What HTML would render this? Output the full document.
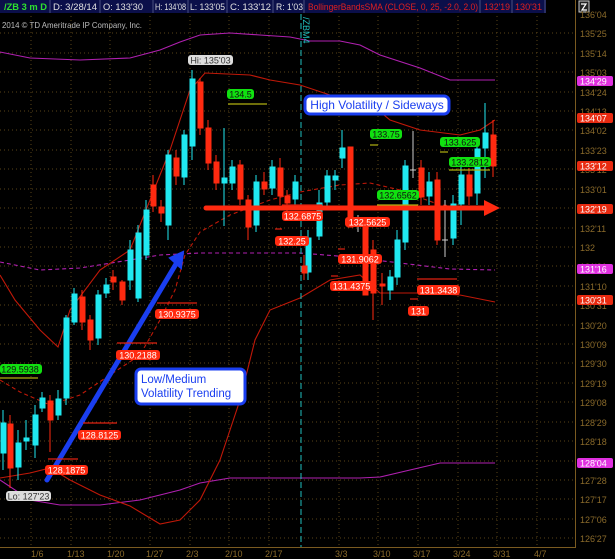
<!DOCTYPE html>
<html><head><meta charset="utf-8"><style>
html,body{margin:0;padding:0;background:#000;width:615px;height:559px;overflow:hidden}
svg{display:block}
text{font-family:"Liberation Sans",sans-serif}
</style></head><body>
<svg width="615" height="559" viewBox="0 0 615 559" xmlns="http://www.w3.org/2000/svg">
<rect width="615" height="559" fill="#000"/>
<!-- header -->
<rect x="0" y="0" width="546" height="13" fill="#0b0f4a"/>
<g stroke="#4a4f80" stroke-width="1">
<line x1="50" y1="0" x2="50" y2="13"/><line x1="100" y1="0" x2="100" y2="13"/><line x1="153" y1="0" x2="153" y2="13"/><line x1="188" y1="0" x2="188" y2="13"/><line x1="227" y1="0" x2="227" y2="13"/><line x1="273" y1="0" x2="273" y2="13"/><line x1="304" y1="0" x2="304" y2="13"/><line x1="480" y1="0" x2="480" y2="13"/><line x1="512" y1="0" x2="512" y2="13"/><line x1="545" y1="0" x2="545" y2="13"/>
</g>
<g font-size="9" fill="#e0e0e0" lengthAdjust="spacingAndGlyphs">
<text x="4" y="10" fill="#2ee02e" font-weight="bold" textLength="43" lengthAdjust="spacingAndGlyphs">/ZB 3 m D</text>
<text x="53" y="10" textLength="44" lengthAdjust="spacingAndGlyphs">D: 3/28/14</text>
<text x="103" y="10" textLength="40" lengthAdjust="spacingAndGlyphs">O: 133'30</text>
<text x="155" y="10" textLength="31" lengthAdjust="spacingAndGlyphs">H: 134'08</text>
<text x="190" y="10" textLength="35" lengthAdjust="spacingAndGlyphs">L: 133'05</text>
<text x="230" y="10" textLength="41" lengthAdjust="spacingAndGlyphs">C: 133'12</text>
<text x="276" y="10" textLength="27" lengthAdjust="spacingAndGlyphs">R: 1'03</text>
<text x="308" y="10" fill="#e02020" textLength="170" lengthAdjust="spacingAndGlyphs">BollingerBandsSMA (CLOSE, 0, 25, -2.0, 2.0)</text>
<text x="484" y="10" fill="#e02020" textLength="26" lengthAdjust="spacingAndGlyphs">132'19</text>
<text x="515" y="10" fill="#e02020" textLength="27" lengthAdjust="spacingAndGlyphs">130'31</text>
</g>
<rect x="579" y="1" width="10" height="11" fill="#222" stroke="#ccc" stroke-width="1"/>
<path d="M581 4h5l-4 6h5" stroke="#fff" fill="none" stroke-width="1.2"/>
<text x="2" y="28" font-size="8.5" fill="#bbb" textLength="140" lengthAdjust="spacingAndGlyphs">2014 © TD Ameritrade IP Company, Inc.</text>

<!-- grid -->
<g stroke="#5a4418" stroke-width="1" stroke-dasharray="1,3">
<line x1="0" y1="33" x2="575" y2="33"/><line x1="0" y1="53" x2="575" y2="53"/><line x1="0" y1="72" x2="575" y2="72"/><line x1="0" y1="92" x2="575" y2="92"/><line x1="0" y1="111" x2="575" y2="111"/><line x1="0" y1="130" x2="575" y2="130"/><line x1="0" y1="150" x2="575" y2="150"/><line x1="0" y1="169" x2="575" y2="169"/><line x1="0" y1="189" x2="575" y2="189"/><line x1="0" y1="208" x2="575" y2="208"/><line x1="0" y1="228" x2="575" y2="228"/><line x1="0" y1="247" x2="575" y2="247"/><line x1="0" y1="266" x2="575" y2="266"/><line x1="0" y1="286" x2="575" y2="286"/><line x1="0" y1="305" x2="575" y2="305"/><line x1="0" y1="325" x2="575" y2="325"/><line x1="0" y1="344" x2="575" y2="344"/><line x1="0" y1="363" x2="575" y2="363"/><line x1="0" y1="383" x2="575" y2="383"/><line x1="0" y1="402" x2="575" y2="402"/><line x1="0" y1="422" x2="575" y2="422"/><line x1="0" y1="441" x2="575" y2="441"/><line x1="0" y1="461" x2="575" y2="461"/><line x1="0" y1="480" x2="575" y2="480"/><line x1="0" y1="499" x2="575" y2="499"/><line x1="0" y1="519" x2="575" y2="519"/><line x1="0" y1="538" x2="575" y2="538"/>
<line x1="31" y1="16" x2="31" y2="547"/><line x1="71" y1="16" x2="71" y2="547"/><line x1="110" y1="16" x2="110" y2="547"/><line x1="150" y1="16" x2="150" y2="547"/><line x1="190" y1="16" x2="190" y2="547"/><line x1="229" y1="16" x2="229" y2="547"/><line x1="269" y1="16" x2="269" y2="547"/><line x1="339" y1="16" x2="339" y2="547"/><line x1="378" y1="16" x2="378" y2="547"/><line x1="418" y1="16" x2="418" y2="547"/><line x1="458" y1="16" x2="458" y2="547"/><line x1="497" y1="16" x2="497" y2="547"/><line x1="537" y1="16" x2="537" y2="547"/>
</g>
<!-- axes -->
<line x1="575.5" y1="0" x2="575.5" y2="547" stroke="#7a5a20"/>
<line x1="0" y1="547.5" x2="576" y2="547.5" stroke="#7a5a20"/>
<g font-size="9" fill="#8a6a2a">
<text x="580" y="18">136'04</text><text x="580" y="37">135'25</text><text x="580" y="57">135'14</text><text x="580" y="76">135'03</text><text x="580" y="96">134'24</text><text x="580" y="115">134'13</text><text x="580" y="134">134'02</text><text x="580" y="154">133'23</text><text x="580" y="173">133'12</text><text x="580" y="193">133'01</text><text x="580" y="212">132'22</text><text x="580" y="232">132'11</text><text x="580" y="251">132</text><text x="580" y="270">131'21</text><text x="580" y="290">131'10</text><text x="580" y="309">130'31</text><text x="580" y="329">130'20</text><text x="580" y="348">130'09</text><text x="580" y="367">129'30</text><text x="580" y="387">129'19</text><text x="580" y="406">129'08</text><text x="580" y="426">128'29</text><text x="580" y="445">128'18</text><text x="580" y="465">128'07</text><text x="580" y="484">127'28</text><text x="580" y="503">127'17</text><text x="580" y="523">127'06</text><text x="580" y="542">126'27</text>
<text x="31" y="557">1/6</text><text x="67" y="557">1/13</text><text x="107" y="557">1/20</text><text x="146" y="557">1/27</text><text x="186" y="557">2/3</text><text x="225" y="557">2/10</text><text x="265" y="557">2/17</text><text x="335" y="557">3/3</text><text x="373" y="557">3/10</text><text x="413" y="557">3/17</text><text x="453" y="557">3/24</text><text x="493" y="557">3/31</text><text x="534" y="557">4/7</text>
</g>

<!-- right price tags -->
<g font-size="9" fill="#fff">
<rect x="577" y="76" width="36" height="10" rx="2" fill="#e030e0"/><text x="580" y="84.5">134'29</text>
<rect x="577" y="113" width="36" height="10" rx="2" fill="#e82a10"/><text x="580" y="121.5">134'07</text>
<rect x="577" y="161" width="36" height="10" rx="2" fill="#e82a10"/><text x="580" y="169.5">133'12</text>
<rect x="577" y="204" width="36" height="10" rx="2" fill="#e82a10"/><text x="580" y="212.5">132'19</text>
<rect x="577" y="264" width="36" height="10" rx="2" fill="#e030e0"/><text x="580" y="272.5">131'16</text>
<rect x="577" y="295" width="36" height="10" rx="2" fill="#e82a10"/><text x="580" y="303.5">130'31</text>
<rect x="577" y="458" width="36" height="10" rx="2" fill="#e030e0"/><text x="580" y="466.5">128'04</text>
</g>

<!-- bands -->
<g fill="none" stroke-width="1.1">
<polyline stroke="#b020b0" points="0,52 30,58 80,60 130,58 160,50 180,42 200,35 230,33 260,35 290,37 310,41 340,41 360,45 380,55 420,68 450,80 495,80"/>
<polyline stroke="#b020b0" points="0,480 30,500 60,505 100,505 140,500 180,490 200,483 230,478 300,478 360,478 380,477 410,470 440,463 495,463"/>
<polyline stroke="#b020b0" stroke-dasharray="4,3" points="0,262 40,270 80,268 130,260 160,255 200,253 300,253 350,257 400,263 450,269 495,270"/>
<polyline stroke="#c01808" points="0,275 15,300 40,330 58,347 70,310 100,270 130,250 150,200 170,150 190,90 205,73 250,75 270,80 300,85 330,95 360,95 390,120 420,130 460,135 480,130 495,120"/>
<polyline stroke="#c01808" points="0,478 30,473 50,468 70,480 100,495 130,506 160,524 180,520 200,500 220,460 240,400 255,340 270,310 300,298 330,280 360,275 380,293 420,293 460,295 495,302"/>
<polyline stroke="#c01808" stroke-dasharray="4,3" points="0,380 20,392 50,405 80,395 110,375 140,355 160,320 175,290 185,255 200,232 230,215 270,200 300,192 340,185 370,183 400,190 440,205 495,208"/>
</g>
<!-- cyan vertical -->
<line x1="301" y1="14" x2="301" y2="547" stroke="#20c0c0" stroke-dasharray="6,3"/>
<text transform="translate(303,17) rotate(90)" font-size="9" fill="#20c0c0">/ZBM4</text>

<!-- candles -->
<g stroke-width="1">
<g stroke="#20e8f0" fill="#20e8f0">
<line x1="3" y1="410" x2="3" y2="470"/><rect x="1" y="423" width="5" height="30"/>
<line x1="18" y1="430" x2="18" y2="480"/><rect x="16" y="443" width="5" height="24"/>
<line x1="26" y1="420" x2="26" y2="450"/><rect x="24" y="438" width="5" height="3"/>
<line x1="35" y1="405" x2="35" y2="458"/><rect x="33" y="415" width="5" height="30"/>
<line x1="42" y1="392" x2="42" y2="412"/><rect x="40" y="398" width="5" height="10"/>
<line x1="58" y1="390" x2="58" y2="420"/><rect x="56" y="399" width="5" height="16"/>
<line x1="66" y1="315" x2="66" y2="405"/><rect x="64" y="318" width="5" height="80"/>
<line x1="74" y1="288" x2="74" y2="325"/><rect x="72" y="294" width="5" height="28"/>
<line x1="98" y1="290" x2="98" y2="345"/><rect x="96" y="295" width="5" height="43"/>
<line x1="106" y1="278" x2="106" y2="298"/><rect x="104" y="285" width="5" height="8"/>
<line x1="130" y1="240" x2="130" y2="290"/><rect x="128" y="250" width="5" height="30"/>
<line x1="138" y1="225" x2="138" y2="302"/><rect x="136" y="233" width="5" height="65"/>
<line x1="146" y1="200" x2="146" y2="260"/><rect x="144" y="210" width="5" height="45"/>
<line x1="168" y1="150" x2="168" y2="240"/><rect x="166" y="155" width="5" height="70"/>
<line x1="184" y1="130" x2="184" y2="185"/><rect x="182" y="135" width="5" height="42"/>
<line x1="192" y1="70" x2="192" y2="160"/><rect x="190" y="79" width="5" height="67"/>
<line x1="224" y1="128" x2="224" y2="226"/><rect x="222" y="178" width="5" height="5"/>
<line x1="232" y1="160" x2="232" y2="190"/><rect x="230" y="167" width="5" height="16"/>
<line x1="256" y1="175" x2="256" y2="232"/><rect x="254" y="182" width="5" height="43"/>
<line x1="272" y1="160" x2="272" y2="195"/><rect x="270" y="167" width="5" height="21"/>
<line x1="295" y1="175" x2="295" y2="210"/><rect x="293" y="182" width="5" height="17"/>
<line x1="308" y1="230" x2="308" y2="280"/><rect x="306" y="238" width="5" height="34"/>
<line x1="319" y1="190" x2="319" y2="240"/><rect x="317" y="203" width="5" height="33"/>
<line x1="327" y1="170" x2="327" y2="210"/><rect x="325" y="176" width="5" height="26"/>
<line x1="335" y1="170" x2="335" y2="190"/><rect x="333" y="176" width="5" height="4"/>
<line x1="342" y1="130" x2="342" y2="168"/><rect x="340" y="148" width="5" height="10"/>
<line x1="390" y1="270" x2="390" y2="300"/><rect x="388" y="277" width="5" height="13"/>
<line x1="397" y1="230" x2="397" y2="285"/><rect x="395" y="240" width="5" height="37"/>
<line x1="405" y1="160" x2="405" y2="250"/><rect x="403" y="166" width="5" height="76"/>
<line x1="429" y1="172" x2="429" y2="205"/><rect x="427" y="182" width="5" height="14"/>
<line x1="453" y1="195" x2="453" y2="245"/><rect x="451" y="204" width="5" height="34"/>
<line x1="461" y1="165" x2="461" y2="225"/><rect x="459" y="175" width="5" height="29"/>
<line x1="477" y1="140" x2="477" y2="205"/><rect x="475" y="149" width="5" height="44"/>
<line x1="485" y1="103" x2="485" y2="178"/><rect x="483" y="133" width="5" height="15"/>
</g>
<g stroke="#ff2a10" fill="#ff2a10">
<line x1="10" y1="415" x2="10" y2="488"/><rect x="8" y="424" width="5" height="44"/>
<line x1="50" y1="395" x2="50" y2="452"/><rect x="48" y="401" width="5" height="19"/>
<line x1="82" y1="290" x2="82" y2="330"/><rect x="80" y="297" width="5" height="25"/>
<line x1="90" y1="315" x2="90" y2="350"/><rect x="88" y="320" width="5" height="20"/>
<line x1="113" y1="270" x2="113" y2="290"/><rect x="111" y="277" width="5" height="5"/>
<line x1="122" y1="280" x2="122" y2="305"/><rect x="120" y="282" width="5" height="18"/>
<line x1="153" y1="175" x2="153" y2="212"/><rect x="151" y="185" width="5" height="21"/>
<line x1="161" y1="200" x2="161" y2="222"/><rect x="159" y="207" width="5" height="6"/>
<line x1="176" y1="150" x2="176" y2="185"/><rect x="174" y="158" width="5" height="18"/>
<line x1="200" y1="78" x2="200" y2="135"/><rect x="198" y="82" width="5" height="46"/>
<line x1="208" y1="120" x2="208" y2="170"/><rect x="206" y="128" width="5" height="35"/>
<line x1="216" y1="155" x2="216" y2="190"/><rect x="214" y="162" width="5" height="21"/>
<line x1="240" y1="160" x2="240" y2="205"/><rect x="238" y="165" width="5" height="34"/>
<line x1="248" y1="195" x2="248" y2="240"/><rect x="246" y="200" width="5" height="27"/>
<line x1="264" y1="172" x2="264" y2="195"/><rect x="262" y="182" width="5" height="7"/>
<line x1="280" y1="158" x2="280" y2="205"/><rect x="278" y="168" width="5" height="28"/>
<line x1="287" y1="190" x2="287" y2="215"/><rect x="285" y="196" width="5" height="7"/>
<line x1="304" y1="255" x2="304" y2="280"/><rect x="302" y="266" width="5" height="7"/>
<rect x="348" y="147" width="5" height="80"/>
<rect x="363" y="222" width="5" height="73"/>
<line x1="373" y1="240" x2="373" y2="320"/><rect x="371" y="250" width="5" height="43"/>
<line x1="382" y1="273" x2="382" y2="305"/><rect x="380" y="284" width="5" height="2"/>
<line x1="421" y1="160" x2="421" y2="205"/><rect x="419" y="168" width="5" height="29"/>
<line x1="437" y1="172" x2="437" y2="245"/><rect x="435" y="180" width="5" height="60"/>
<line x1="469" y1="168" x2="469" y2="205"/><rect x="467" y="175" width="5" height="21"/>
<line x1="493" y1="120" x2="493" y2="177"/><rect x="491" y="135" width="5" height="31"/>
</g>
<g stroke="#ccc"><line x1="413" y1="131" x2="413" y2="178"/><line x1="410" y1="170" x2="416" y2="170"/>
<line x1="445" y1="200" x2="445" y2="257"/><line x1="442" y1="240" x2="448" y2="240"/>
<line x1="358" y1="215" x2="358" y2="232"/></g>
</g>

<!-- red horizontal arrow -->
<line x1="206" y1="208" x2="488" y2="208" stroke="#ff2a10" stroke-width="5" stroke-linecap="round"/>
<polygon points="484,200 500,208 484,216" fill="#ff2a10"/>
<!-- blue arrow -->
<line x1="47" y1="480" x2="176" y2="264" stroke="#1a3ef0" stroke-width="5" stroke-linecap="round"/>
<polygon points="170,258 183,252 181,268" fill="#1a3ef0" stroke="#1a3ef0" stroke-width="2"/>

<!-- label lines -->
<g stroke-width="1.2">
<line x1="157" y1="303" x2="197" y2="303" stroke="#e02010"/>
<line x1="117" y1="343" x2="157" y2="343" stroke="#e02010"/>
<line x1="83" y1="423" x2="117" y2="423" stroke="#e02010"/>
<line x1="48" y1="459" x2="78" y2="459" stroke="#e02010"/>
<line x1="0" y1="378" x2="38" y2="378" stroke="#b0b010"/>
<line x1="228" y1="104" x2="267" y2="104" stroke="#b0b010"/>
<line x1="370" y1="145" x2="378" y2="145" stroke="#b0b010"/>
<line x1="440" y1="152" x2="448" y2="152" stroke="#b0b010"/>
<line x1="449" y1="170" x2="490" y2="170" stroke="#b0b010"/>
<line x1="377" y1="205" x2="418" y2="205" stroke="#b0b010"/>
<line x1="282" y1="205" x2="322" y2="205" stroke="#e02010"/>
<line x1="275" y1="229" x2="282" y2="229" stroke="#e02010"/>
<line x1="338" y1="249" x2="345" y2="249" stroke="#e02010"/>
<line x1="331" y1="276" x2="338" y2="276" stroke="#e02010"/>
<line x1="417" y1="279" x2="457" y2="279" stroke="#e02010"/>
<line x1="410" y1="299" x2="418" y2="299" stroke="#e02010"/>
</g>
<!-- labels -->
<g font-size="9" fill="#fff" text-anchor="middle">
<rect x="155" y="309" width="44" height="10" rx="3" fill="#ff2a10"/><text x="177" y="317.5">130.9375</text>
<rect x="116" y="350" width="44" height="10" rx="3" fill="#ff2a10"/><text x="138" y="358.5">130.2188</text>
<rect x="78" y="430" width="43" height="10" rx="3" fill="#ff2a10"/><text x="99.5" y="438.5">128.8125</text>
<rect x="45" y="465" width="43" height="10" rx="3" fill="#ff2a10"/><text x="66.5" y="473.5">128.1875</text>
<rect x="6" y="491" width="45" height="10" rx="3" fill="#ddd"/><text x="28.5" y="499.5" fill="#333">Lo: 127'23</text>
<rect x="0" y="364" width="42" height="10" rx="3" fill="#10e010"/><text x="20" y="372.5" fill="#111">129.5938</text>
<rect x="188" y="55" width="45" height="10" rx="3" fill="#ddd"/><text x="210.5" y="63.5" fill="#333">Hi: 135'03</text>
<rect x="227" y="89" width="27" height="10" rx="3" fill="#10e010"/><text x="240.5" y="97.5" fill="#111">134.5</text>
<rect x="370" y="129" width="32" height="10" rx="3" fill="#10e010"/><text x="386" y="137.5" fill="#111">133.75</text>
<rect x="440" y="137" width="40" height="10" rx="3" fill="#10e010"/><text x="460" y="145.5" fill="#111">133.625</text>
<rect x="449" y="157" width="42" height="10" rx="3" fill="#10e010"/><text x="470" y="165.5" fill="#111">133.2812</text>
<rect x="377" y="190" width="42" height="10" rx="3" fill="#10e010"/><text x="398" y="198.5" fill="#111">132.6562</text>
<rect x="282" y="211" width="41" height="10" rx="3" fill="#ff2a10"/><text x="302.5" y="219.5">132.6875</text>
<rect x="345" y="217" width="45" height="10" rx="3" fill="#ff2a10"/><text x="367.5" y="225.5">132.5625</text>
<rect x="275" y="236" width="34" height="10" rx="3" fill="#ff2a10"/><text x="292" y="244.5">132.25</text>
<rect x="338" y="254" width="44" height="10" rx="3" fill="#ff2a10"/><text x="360" y="262.5">131.9062</text>
<rect x="330" y="281" width="43" height="10" rx="3" fill="#ff2a10"/><text x="351.5" y="289.5">131.4375</text>
<rect x="417" y="285" width="43" height="10" rx="3" fill="#ff2a10"/><text x="438.5" y="293.5">131.3438</text>
<rect x="408" y="306" width="21" height="10" rx="3" fill="#ff2a10"/><text x="418.5" y="314.5">131</text>
</g>
<!-- blue callouts -->
<rect x="305" y="96" width="144" height="18" rx="5" fill="#fff" stroke="#1a3ef0" stroke-width="3"/>
<text x="377" y="109" font-size="12" fill="#1a3ef0" text-anchor="middle">High Volatility / Sideways</text>
<rect x="136" y="369" width="109" height="35" rx="5" fill="#fff" stroke="#1a3ef0" stroke-width="3"/>
<text x="141" y="383" font-size="11.5" fill="#1a3ef0">Low/Medium</text>
<text x="141" y="397" font-size="11.5" fill="#1a3ef0">Volatility Trending</text>
</svg>
</body></html>
